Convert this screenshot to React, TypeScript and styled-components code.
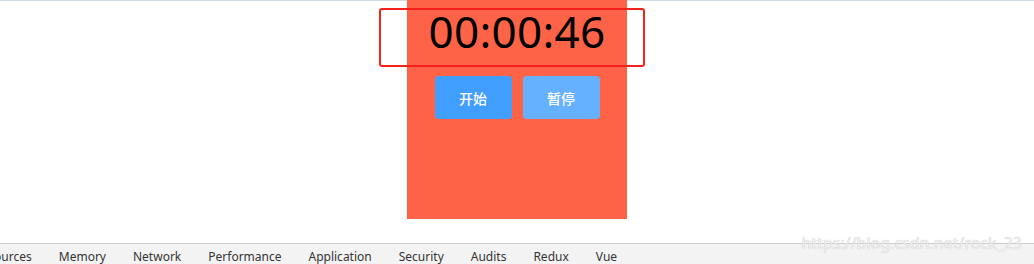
import styled, { createGlobalStyle } from 'styled-components';

const GlobalStyle = createGlobalStyle`
  html, body {
    margin: 0;
    padding: 0;
    background: #fff;
  }
  body {
    font-family: "Noto Sans", "Noto Sans CJK SC", sans-serif;
  }
`;

const tabs = ['Sources', 'Memory', 'Network', 'Performance', 'Application', 'Security', 'Audits', 'Redux', 'Vue'];

const App = () => {
  return (
    <Page>
      <GlobalStyle />
      <TopLine />
      <Stage>
        <Panel>
          <TimerRow>
            <Timer>00:00:46</Timer>
            <Highlight />
          </TimerRow>
          <Buttons>
            <Button>开始</Button>
            <Button $muted>暂停</Button>
          </Buttons>
        </Panel>
      </Stage>
      <TabBar>
        <TabList>
          {tabs.map((t) => (
            <Tab key={t}>{t}</Tab>
          ))}
        </TabList>
        <Watermark>https://blog.csdn.net/rock_23</Watermark>
      </TabBar>
    </Page>
  );
};

export default App;

const Page = styled.div`
  width: 1034px;
  height: 264px;
  overflow: hidden;
  display: flex;
  flex-direction: column;
`;

const TopLine = styled.div`
  height: 1px;
  background: #d3dbe5;
  flex-shrink: 0;
`;

const Stage = styled.div`
  display: flex;
  justify-content: center;
  height: 243px;
  margin-top: -1px;
  flex-shrink: 0;
`;

const Panel = styled.div`
  width: 220px;
  height: 219px;
  background: #ff6347;
  display: flex;
  flex-direction: column;
  align-items: center;
`;

const TimerRow = styled.div`
  position: relative;
  width: 220px;
  height: 68px;
  display: flex;
  justify-content: center;
`;

const Timer = styled.div`
  font-family: "Noto Sans", sans-serif;
  font-size: 44px;
  line-height: 1;
  color: #000;
  padding-top: 9px;
  letter-spacing: 0.3px;
`;

const Highlight = styled.div`
  position: absolute;
  left: -28px;
  top: 8px;
  width: 262px;
  height: 55px;
  border: 2px solid #f5221b;
  border-radius: 3px;
`;

const Buttons = styled.div`
  display: flex;
  gap: 11px;
  margin-top: 8px;
`;

const Button = styled.button<{ $muted?: boolean }>`
  width: 77px;
  height: 43px;
  border: none;
  border-radius: 4px;
  background: ${(p) => (p.$muted ? '#66b1ff' : '#409eff')};
  color: #fff;
  font-family: "Noto Sans CJK SC", sans-serif;
  font-size: 14px;
  font-weight: 500;
  padding: 0;
  cursor: pointer;
`;

const TabBar = styled.div`
  position: relative;
  flex: 1;
  background: #f3f3f3;
  border-top: 1px solid #cccccc;
`;

const TabList = styled.div`
  display: flex;
  margin-left: -26px;
  padding-top: 5px;
`;

const Tab = styled.span`
  font-family: "Noto Sans", sans-serif;
  font-size: 12px;
  line-height: 16px;
  color: #333;
  padding: 0 13.5px;
  white-space: nowrap;
`;

const Watermark = styled.span`
  position: absolute;
  right: 12px;
  top: -10px;
  font-family: "Noto Sans", sans-serif;
  font-size: 16px;
  line-height: 18px;
  color: #eeeeee;
  text-shadow: 0 0 1px #bdbdbd;
`;
